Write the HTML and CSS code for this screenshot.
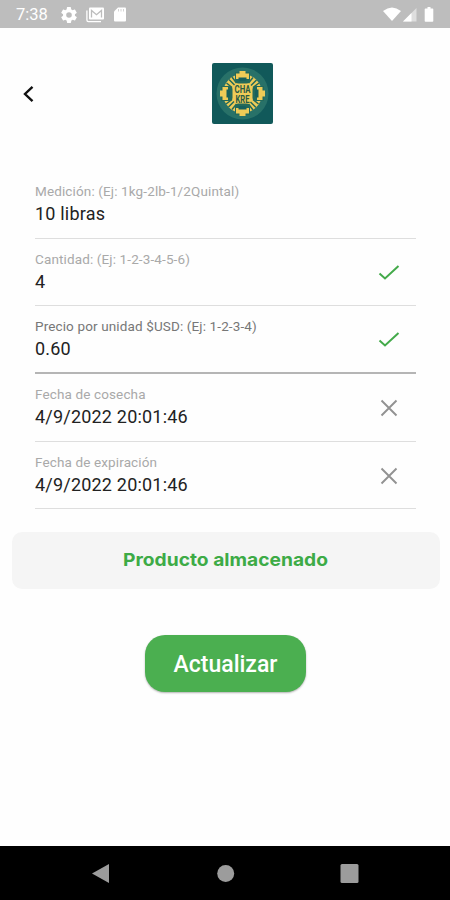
FILE: index.html
```
<!DOCTYPE html>
<html lang="es">
<head>
<meta charset="utf-8">
<title>Producto</title>
<link rel="stylesheet" href="styles.css">
</head>
<body>
<div class="status">
  <span class="time">7:38</span>
  <svg class="gear" width="16" height="16" viewBox="2 2 20 20"><path fill="#fff" d="M19.4 13a7.500 7.500 0 0 0 0-2l2.100-1.600c.2-.2.2-.4.1-.6l-2-3.500c-.1-.2-.4-.3-.6-.2l-2.500 1a7 7 0 0 0-1.700-1l-.4-2.600a.5.5 0 0 0-.5-.4h-4a.5.5 0 0 0-.5.400L9.100 5.100a7 7 0 0 0-1.700 1l-2.400-1c-.3-.1-.5 0-.6.2l-2 3.500c-.1.2-.1.4.1.600L4.600 11a7.500 7.500 0 0 0 0 2l-2.100 1.600c-.2.2-.2.4-.1.600l2 3.500c.1.2.4.3.6.2l2.400-1a7 7 0 0 0 1.700 1l.4 2.600c0 .2.2.4.5.4h4c.3 0 .5-.2.5-.4l.4-2.600a7 7 0 0 0 1.700-1l2.500 1c.2.1.5 0 .6-.2l2-3.500c.1-.2.1-.4-.1-.6zM12 15.500a3.500 3.500 0 1 1 0-7 3.500 3.500 0 0 1 0 7z"/></svg>
  <svg class="mail" width="18" height="16" viewBox="0 0 18 16"><path fill="none" stroke="#fff" stroke-width="1.300" d="M.9 3.500V13q0 1.600 1.600 1.600H15"/><rect x="3" y=".5" width="15" height="12" rx="1" fill="#fff"/><path d="M5.500 10.500v-7l5 4.200 5-4.200v7" fill="none" stroke="#bdbdbd" stroke-width="1.300"/></svg>
  <svg class="sd" width="12" height="15" viewBox="0 0 12 15"><path fill="#fff" d="M4 .5h7q1 0 1 1V13.500q0 1-1 1H1q-1 0-1-1V4.500z"/><path stroke="#d4d4d4" stroke-width="1" d="M4.500 2v2.500M7 2v2.500M9.500 2v2.500"/></svg>
  <svg class="signals" width="52" height="16" viewBox="0 0 52 16"><path fill="#fff" d="M0 4Q9-3 18 4L9 14z"/><path fill="#dedede" d="M33.500 1v13.500H20z"/><path fill="#fff" d="M28.500 6v8.500H20z"/><path fill="#fff" d="M44.500 0h3v1.500h2q.8 0 .8.800V14q0 .8-.8.800h-7q-.8 0-.8-.8V2.300q0-.8.8-.8h2z"/></svg>
</div>
<header class="header">
  <svg class="back" width="14" height="18" viewBox="0 0 14 18"><path fill="none" stroke="#111" stroke-width="2.400" d="M10.500 1.800 3 9l7.500 7.200"/></svg>
  <svg class="logo" width="61" height="61" viewBox="0 0 61 61">
    <rect width="61" height="61" rx="2" fill="#11595a"/>
    <circle cx="30.500" cy="30.500" r="26" fill="#287168"/>
    <circle cx="30.500" cy="30.500" r="19.500" fill="#efcb57"/>
    <g fill="none" stroke="#23695b" stroke-width="1.500">
      <path id="slits" d="m20 14 4.500 6m-7.500-3.500 5.500 5.500m-8-2 5.500 4.500"/>
      <use href="#slits" transform="rotate(90 30.500 30.500)"/>
      <use href="#slits" transform="rotate(180 30.500 30.500)"/>
      <use href="#slits" transform="rotate(270 30.500 30.500)"/>
    </g>
    <g>
      <g id="arm"><path d="M23 9h15v8q0 3.500-3.500 3.500h-8Q23 20.500 23 17z" fill="#23695b"/><path d="M27.500 8h6v2.500H37V16H24v-5.500h3.500z" fill="#efcb57"/><path d="M26.500 14.500h8V16q0 2-2 2h-4q-2 0-2-2z" fill="#17605c"/></g>
      <use href="#arm" transform="rotate(90 30.500 30.500)"/>
      <use href="#arm" transform="rotate(180 30.500 30.500)"/>
      <use href="#arm" transform="rotate(270 30.500 30.500)"/>
    </g>
    <g class="logo-text"><text x="30.500" y="29.500" textLength="16" lengthAdjust="spacingAndGlyphs">CHA</text><text x="30.500" y="39.500" textLength="14" lengthAdjust="spacingAndGlyphs">KRE</text></g>
  </svg>
</header>
<main>
  <form class="fields">
    <div class="field"><div><div class="label">Medición: (Ej: 1kg-2lb-1/2Quintal)</div><div class="value">10 libras</div></div></div>
    <div class="field"><div><div class="label">Cantidad: (Ej: 1-2-3-4-5-6)</div><div class="value">4</div></div><svg class="mark" width="22" height="18" viewBox="0 0 22 18"><path fill="none" stroke="#43aa4a" stroke-width="2" d="m1.500 9.500 5.500 5L20.500 2"/></svg></div>
    <div class="field focus"><div><div class="label">Precio por unidad $USD: (Ej: 1-2-3-4)</div><div class="value">0.60</div></div><svg class="mark" width="22" height="18" viewBox="0 0 22 18"><path fill="none" stroke="#43aa4a" stroke-width="2" d="m1.500 9.500 5.500 5L20.500 2"/></svg></div>
    <div class="field"><div><div class="label">Fecha de cosecha</div><div class="value">4/9/2022 20:01:46</div></div><svg class="mark" width="22" height="18" viewBox="0 0 22 18"><path stroke="#929292" stroke-width="1.900" d="m3.500 1.500 15 15m0-15-15 15"/></svg></div>
    <div class="field"><div><div class="label">Fecha de expiración</div><div class="value">4/9/2022 20:01:46</div></div><svg class="mark" width="22" height="18" viewBox="0 0 22 18"><path stroke="#929292" stroke-width="1.900" d="m3.500 1.500 15 15m0-15-15 15"/></svg></div>
  </form>
  <div class="notice"><svg width="206" height="24" viewBox="0 0 206 24"><text x="0" y="18" textLength="205" lengthAdjust="spacingAndGlyphs">Producto almacenado</text></svg></div>
  <button class="update" type="button">Actualizar</button>
</main>
<nav class="navbar">
  <svg width="450" height="54" viewBox="0 0 450 54"><g fill="#9c9c9c"><path d="m92 27.500 17-9.500v19z"/><circle cx="225.700" cy="27.500" r="8.500"/><rect x="340.500" y="18" width="18" height="19" rx="1.500"/></g></svg>
</nav>
</body>
</html>
```
FILE: styles.css
```
* { box-sizing: border-box; }
body {
  margin: 0;
  height: 900px;
  display: flex;
  flex-direction: column;
  overflow: hidden;
  background: #fefefe;
  font-family: Roboto, sans-serif;
}
svg { display: block; flex: none; }
.status {
  height: 28px;
  background: #bdbdbd;
  display: flex;
  align-items: center;
  padding: 1px 15px 0 16px;
}
.time { width: 45px; color: #fff; font-size: 16.500px; }
.mail { margin-left: 9px; }
.sd { margin-left: 10px; }
.signals { margin-left: auto; }
.header {
  height: 143px;
  display: flex;
  align-items: flex-start;
  padding: 35px 0 0 22px;
}
.back { margin-top: 22px; }
.logo { margin: 0 0 0 176px; }
.logo-text {
  fill: #2a5b45;
  font-size: 10px;
  line-height: 1;
  font-weight: 700;
  text-anchor: middle;
}
main { flex: 1; }
.fields { padding: 0 34px 0 35px; }
.field {
  height: 67.700px;
  display: flex;
  justify-content: space-between;
  align-items: flex-start;
  padding-top: 12px;
  border-bottom: 1px solid #dedede;
}
.focus { border-bottom: 2px solid #b5b5b5; }
.label {
  height: 17px;
  line-height: 17px;
  font-size: 13.500px;
  letter-spacing: .13px;
  color: #a9a9a9;
  white-space: nowrap;
}
.focus .label { color: #777; }
.value {
  height: 28px;
  line-height: 28px;
  font-size: 18px;
  letter-spacing: .2px;
  color: #222;
}
.mark { margin: 13px 16px 0 0; }
.notice {
  height: 57px;
  margin: 22.500px 10px 0 12px;
  border-radius: 10px;
  background: #f5f5f5;
  display: flex;
  justify-content: center;
  align-items: center;
}
.notice text { fill: #3dab46; font-size: 18px; font-weight: 700; font-family: Inter, sans-serif; }
.update {
  display: block;
  width: 161px;
  height: 57px;
  margin: 46px auto 0 145px;
  padding: 2px 0 0;
  border: 0;
  border-radius: 20px;
  background: #4baf50;
  box-shadow: 0 1px 2px rgba(0, 0, 0, .3);
  color: #fff;
  font: 500 23px Roboto, sans-serif;
}
.navbar { height: 54px; background: #000; }
```
